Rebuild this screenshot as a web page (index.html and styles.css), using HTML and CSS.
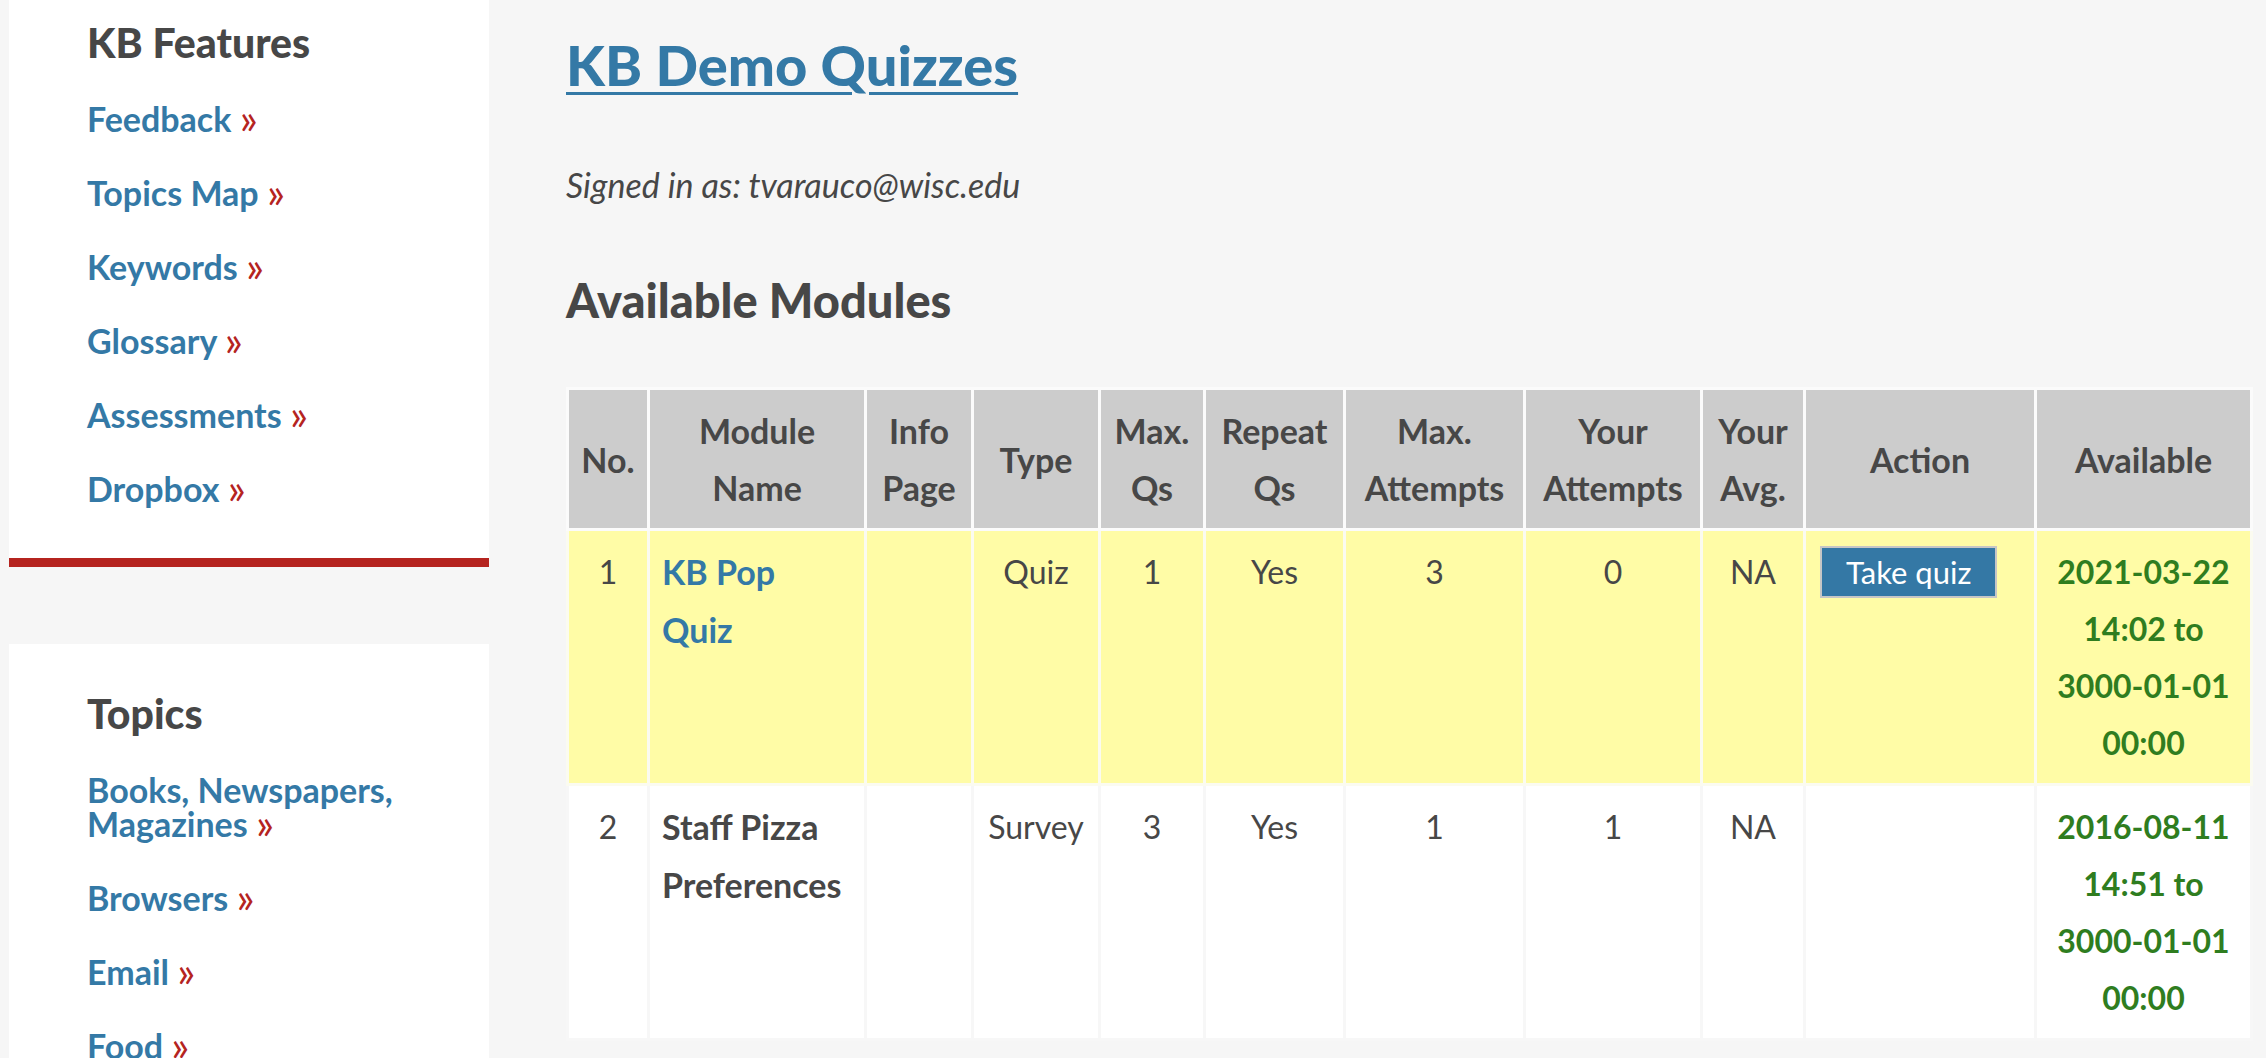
FILE: index.html
```html
<!DOCTYPE html>
<html lang="en">
<head>
<meta charset="utf-8">
<title>KB Demo Quizzes</title>
<link rel="stylesheet" href="styles.css">
</head>
<body>
<div class="page">
  <aside class="sidebar">
    <section class="panel panel-first">
      <h2 class="panel-title">KB Features</h2>
      <ul class="nav">
        <li><a href="#">Feedback</a> <span class="raquo">»</span></li>
        <li><a href="#">Topics Map</a> <span class="raquo">»</span></li>
        <li><a href="#">Keywords</a> <span class="raquo">»</span></li>
        <li><a href="#">Glossary</a> <span class="raquo">»</span></li>
        <li><a href="#">Assessments</a> <span class="raquo">»</span></li>
        <li><a href="#">Dropbox</a> <span class="raquo">»</span></li>
      </ul>
    </section>
    <section class="panel panel-second">
      <h2 class="panel-title">Topics</h2>
      <ul class="nav">
        <li><a href="#">Books, Newspapers, Magazines</a> <span class="raquo">»</span></li>
        <li><a href="#">Browsers</a> <span class="raquo">»</span></li>
        <li><a href="#">Email</a> <span class="raquo">»</span></li>
        <li><a href="#">Food</a> <span class="raquo">»</span></li>
      </ul>
    </section>
  </aside>
  <main class="main">
    <h1 class="title"><a href="#">KB Demo Quizzes</a></h1>
    <p class="signed">Signed in as: tvarauco@wisc.edu</p>
    <h2 class="section-title">Available Modules</h2>
    <table class="modules">
      <colgroup>
        <col class="c-no"><col class="c-name"><col class="c-info"><col class="c-type"><col class="c-maxq"><col class="c-rep"><col class="c-maxa"><col class="c-youra"><col class="c-avg"><col class="c-act"><col class="c-avail">
      </colgroup>
      <thead>
        <tr>
          <th>No.</th><th>Module Name</th><th>Info Page</th><th>Type</th><th>Max. Qs</th><th>Repeat Qs</th><th>Max. Attempts</th><th>Your Attempts</th><th>Your Avg.</th><th>Action</th><th>Available</th>
        </tr>
      </thead>
      <tbody>
        <tr class="row-active">
          <td>1</td>
          <td class="name"><a href="#" class="name-link">KB Pop Quiz</a></td>
          <td></td>
          <td>Quiz</td>
          <td>1</td>
          <td>Yes</td>
          <td>3</td>
          <td>0</td>
          <td>NA</td>
          <td class="action"><button class="btn">Take quiz</button></td>
          <td class="avail">2021-03-22 14:02 to 3000-01-01 00:00</td>
        </tr>
        <tr>
          <td>2</td>
          <td class="name"><span class="name-plain">Staff Pizza Preferences</span></td>
          <td></td>
          <td>Survey</td>
          <td>3</td>
          <td>Yes</td>
          <td>1</td>
          <td>1</td>
          <td>NA</td>
          <td class="action"></td>
          <td class="avail">2016-08-11 14:51 to 3000-01-01 00:00</td>
        </tr>
      </tbody>
    </table>
  </main>
</div>
</body>
</html>
```
FILE: styles.css
```css
html, body {
  margin: 0;
  padding: 0;
  background: #f6f6f6;
  font-family: Lato, "Open Sans", sans-serif;
  color: #474747;
}

.page {
  display: flex;
  align-items: flex-start;
}

.sidebar {
  width: 480px;
  margin-left: 9px;
  flex: none;
}

.panel {
  background: #ffffff;
  padding: 47px 20px 40px 78px;
}

.panel-first {
  padding-top: 20px;
  padding-bottom: 52px;
  border-bottom: 9px solid #b5241f;
  margin-bottom: 77px;
}

.panel-title {
  margin: 0 0 36px 0;
  font-size: 41px;
  line-height: 46px;
  font-weight: 900;
  color: #474747;
}

.nav {
  list-style: none;
  margin: 0;
  padding: 0;
}

.nav li {
  font-size: 34px;
  line-height: 34px;
  font-weight: 700;
  margin-bottom: 40px;
}

.nav li:last-child {
  margin-bottom: 0;
}

.nav a {
  color: #3479a6;
  text-decoration: none;
}

.raquo {
  color: #b5241f;
  font-weight: 400;
  font-size: 42px;
  line-height: 0;
  position: relative;
  top: 2px;
}

.main {
  flex: 1;
  margin-left: 77px;
  margin-right: 14px;
}

.title {
  margin: 35px 0 0 0;
  font-size: 56px;
  line-height: 60px;
  font-weight: 900;
}

.title a {
  color: #3479a6;
  text-decoration: underline;
  text-decoration-thickness: 3px;
  text-underline-offset: 6px;
}

.signed {
  margin: 70px 0 0 0;
  font-size: 34px;
  line-height: 40px;
  font-style: italic;
  color: #474747;
}

.section-title {
  margin: 68px 0 0 0;
  font-size: 47px;
  line-height: 54px;
  font-weight: 900;
  color: #474747;
}

.modules {
  margin-top: 60px;
  width: 100%;
  table-layout: fixed;
  border-collapse: collapse;
  font-size: 32px;
  line-height: 57px;
}

.c-no { width: 81px; }
.c-name { width: 217px; }
.c-info { width: 107px; }
.c-type { width: 127px; }
.c-maxq { width: 105px; }
.c-rep { width: 140px; }
.c-maxa { width: 180px; }
.c-youra { width: 177px; }
.c-avg { width: 103px; }
.c-act { width: 231px; }
.c-avail { width: 216px; }

.modules th,
.modules td {
  border: 3px solid #f7f7f7;
  padding: 12px 6px;
  text-align: center;
}

.modules th {
  background: #cccccc;
  font-size: 34px;
  font-weight: 700;
  vertical-align: middle;
  border-color: #fbfbfb;
}

.modules td {
  background: #ffffff;
  vertical-align: top;
  font-weight: 400;
}

.modules tr.row-active td {
  background: #fffca6;
  border-color: #fbfbf0;
}

.modules td.name {
  text-align: left;
  padding-left: 12px;
  padding-right: 30px;
}

.name-link {
  color: #3479a6;
  font-weight: 700;
  font-size: 34px;
  text-decoration: none;
}

.name-plain {
  font-weight: 700;
  font-size: 34px;
  color: #474747;
}

.modules td.action {
  text-align: left;
  padding-left: 14px;
}

.btn {
  margin-top: 3px;
  background: #3478a5;
  color: #ffffff;
  border: 2px solid #c6c6c6;
  font-family: Lato, "Open Sans", sans-serif;
  font-size: 31px;
  line-height: 40px;
  padding: 4px 24px;
  vertical-align: top;
}

.modules td.avail {
  color: #2f7d1f;
  font-weight: 700;
}
```
